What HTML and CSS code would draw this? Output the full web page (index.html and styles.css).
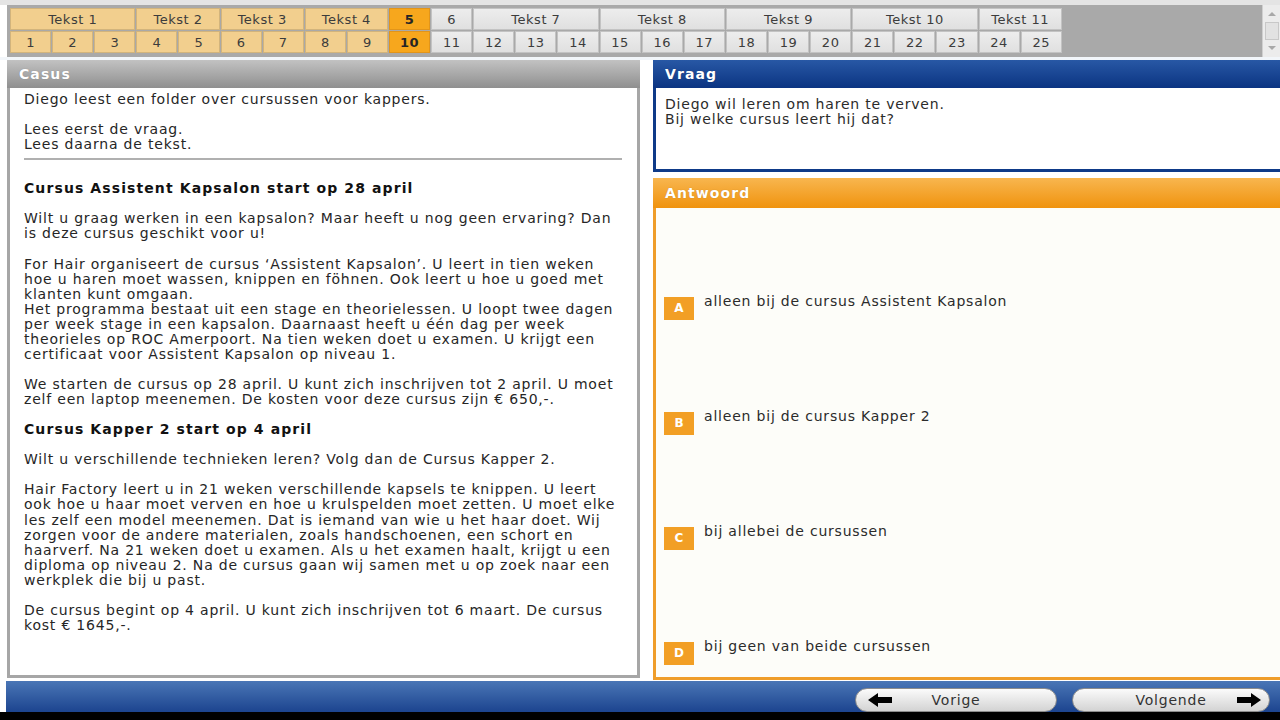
FILE: index.html
```html
<!DOCTYPE html>
<html lang="nl">
<head>
<meta charset="utf-8">
<title>Casus</title>
<link rel="stylesheet" href="styles.css">
</head>
<body>
<div class="topstrip"></div>
<div class="navwrap">
  <div class="nav">
    <div class="cell tan span3">Tekst 1</div>
    <div class="cell tan span2">Tekst 2</div>
    <div class="cell tan span2">Tekst 3</div>
    <div class="cell tan span2">Tekst 4</div>
    <div class="cell active">5</div>
    <div class="cell light">6</div>
    <div class="cell light span3">Tekst 7</div>
    <div class="cell light span3">Tekst 8</div>
    <div class="cell light span3">Tekst 9</div>
    <div class="cell light span3">Tekst 10</div>
    <div class="cell light span2">Tekst 11</div>
    <div class="cell tan">1</div>
    <div class="cell tan">2</div>
    <div class="cell tan">3</div>
    <div class="cell tan">4</div>
    <div class="cell tan">5</div>
    <div class="cell tan">6</div>
    <div class="cell tan">7</div>
    <div class="cell tan">8</div>
    <div class="cell tan">9</div>
    <div class="cell active">10</div>
    <div class="cell light">11</div>
    <div class="cell light">12</div>
    <div class="cell light">13</div>
    <div class="cell light">14</div>
    <div class="cell light">15</div>
    <div class="cell light">16</div>
    <div class="cell light">17</div>
    <div class="cell light">18</div>
    <div class="cell light">19</div>
    <div class="cell light">20</div>
    <div class="cell light">21</div>
    <div class="cell light">22</div>
    <div class="cell light">23</div>
    <div class="cell light">24</div>
    <div class="cell light">25</div>
  </div>
  <div class="scrollbar">
    <span class="sb-up"></span>
    <span class="sb-thumb"></span>
    <span class="sb-down"></span>
  </div>
</div>
<div class="sep"></div>
<main class="panels">
  <section class="casus">
    <div class="phead casus-head">Casus</div>
    <div class="casus-body">
      <p>Diego leest een folder over cursussen voor kappers.</p>
      <p class="before-rule">Lees eerst de vraag.<br>Lees daarna de tekst.</p>
      <hr class="rule">
      <p class="h">Cursus Assistent Kapsalon start op 28 april</p>
      <p>Wilt u graag werken in een kapsalon? Maar heeft u nog geen ervaring? Dan<br>is deze cursus geschikt voor u!</p>
      <p>For Hair organiseert de cursus ‘Assistent Kapsalon’. U leert in tien weken<br>hoe u haren moet wassen, knippen en föhnen. Ook leert u hoe u goed met<br>klanten kunt omgaan.<br>Het programma bestaat uit een stage en theorielessen. U loopt twee dagen<br>per week stage in een kapsalon. Daarnaast heeft u één dag per week<br>theorieles op ROC Amerpoort. Na tien weken doet u examen. U krijgt een<br>certificaat voor Assistent Kapsalon op niveau 1.</p>
      <p>We starten de cursus op 28 april. U kunt zich inschrijven tot 2 april. U moet<br>zelf een laptop meenemen. De kosten voor deze cursus zijn € 650,-.</p>
      <p class="h">Cursus Kapper 2 start op 4 april</p>
      <p>Wilt u verschillende technieken leren? Volg dan de Cursus Kapper 2.</p>
      <p>Hair Factory leert u in 21 weken verschillende kapsels te knippen. U leert<br>ook hoe u haar moet verven en hoe u krulspelden moet zetten. U moet elke<br>les zelf een model meenemen. Dat is iemand van wie u het haar doet. Wij<br>zorgen voor de andere materialen, zoals handschoenen, een schort en<br>haarverf. Na 21 weken doet u examen. Als u het examen haalt, krijgt u een<br>diploma op niveau 2. Na de cursus gaan wij samen met u op zoek naar een<br>werkplek die bij u past.</p>
      <p>De cursus begint op 4 april. U kunt zich inschrijven tot 6 maart. De cursus<br>kost € 1645,-.</p>
    </div>
  </section>
  <section class="right">
    <div class="vraag">
      <div class="phead vraag-head">Vraag</div>
      <div class="vraag-body">Diego wil leren om haren te verven.<br>Bij welke cursus leert hij dat?</div>
    </div>
    <div class="antwoord">
      <div class="phead antwoord-head">Antwoord</div>
      <div class="antwoord-body">
        <div class="option"><span class="letter">A</span><span class="otext">alleen bij de cursus Assistent Kapsalon</span></div>
        <div class="option"><span class="letter">B</span><span class="otext">alleen bij de cursus Kapper 2</span></div>
        <div class="option"><span class="letter">C</span><span class="otext">bij allebei de cursussen</span></div>
        <div class="option last"><span class="letter">D</span><span class="otext">bij geen van beide cursussen</span></div>
      </div>
    </div>
  </section>
</main>
<footer class="bottombar">
  <button class="btn prev">
    <svg class="arrow" viewBox="0 0 24 14" width="24" height="14"><polygon points="0,7 10,0 10,4 24,4 24,10 10,10 10,14" fill="#000"/></svg>
    <span class="btext">Vorige</span>
    <span class="spacer"></span>
  </button>
  <button class="btn next">
    <span class="spacer"></span>
    <span class="btext">Volgende</span>
    <svg class="arrow" viewBox="0 0 24 14" width="24" height="14"><polygon points="24,7 14,0 14,4 0,4 0,10 14,10 14,14" fill="#000"/></svg>
  </button>
</footer>
<div class="blackstrip"></div>
</body>
</html>
```

FILE: styles.css
```css
* { box-sizing: border-box; }
html, body {
  margin: 0;
  padding: 0;
  width: 1280px;
  height: 720px;
  overflow: hidden;
  background: #ffffff;
  font-family: "DejaVu Sans", Verdana, sans-serif;
  font-size: 14px;
  letter-spacing: 0.8px;
  color: #2b2b2b;
}

.topstrip {
  height: 5px;
  background: #e4e4e4;
}

.navwrap {
  display: flex;
  height: 52px;
  margin-left: 7px;
}
.nav {
  flex: 1;
  background: #a9a9a9;
  padding: 3px;
  display: grid;
  grid-template-columns: repeat(25, 41.12px);
  grid-template-rows: 22px 22px;
  column-gap: 1px;
  row-gap: 1px;
  align-content: start;
}
.cell {
  display: flex;
  align-items: center;
  justify-content: center;
  font-size: 13px;
  letter-spacing: 0.5px;
  color: #3c3c3c;
  border: 1px solid #c9b183;
}
.span2 { grid-column: span 2; }
.span3 { grid-column: span 3; }
.tan {
  background: #f2cf8e;
  border-color: #d2b47c;
}
.active {
  background: #f7a71d;
  border-color: #e2951a;
  font-weight: bold;
  color: #252525;
}
.light {
  background: linear-gradient(#ededed, #e0e0e0);
  border-color: #c3c3c3;
}

.scrollbar {
  width: 18px;
  flex-shrink: 0;
  background: #ececec;
  border-left: 1px solid #cfcfcf;
  display: flex;
  flex-direction: column;
  align-items: center;
  padding-top: 7px;
}
.sb-up {
  width: 0;
  height: 0;
  border-left: 4px solid transparent;
  border-right: 4px solid transparent;
  border-bottom: 4px solid #a8a8a8;
}
.sb-thumb {
  width: 14px;
  height: 18px;
  margin-top: 6px;
  background: #e2e2e2;
  border: 1px solid #c8c8c8;
}
.sb-down {
  width: 0;
  height: 0;
  margin-top: 6px;
  border-left: 4px solid transparent;
  border-right: 4px solid transparent;
  border-top: 4px solid #a8a8a8;
}

.sep {
  height: 3px;
  background: #f2f6fa;
}

.panels {
  display: flex;
  gap: 13px;
  margin-left: 7px;
  height: 620px;
}

.phead {
  color: #ffffff;
  font-weight: bold;
  font-size: 14px;
  letter-spacing: 1.1px;
  padding-left: 12px;
  display: flex;
  align-items: center;
  text-shadow: 0 0 1px rgba(0,0,0,0.25);
}

.casus {
  width: 633px;
  flex-shrink: 0;
  display: flex;
  flex-direction: column;
}
.casus-head {
  height: 28px;
  background: linear-gradient(#c2c2c2, #8f8f8f);
}
.casus-body {
  height: 590px;
  background: #ffffff;
  border: 3px solid #a6a6a6;
  border-top: none;
  padding: 4px 14px 0 14px;
  line-height: 15.06px;
  white-space: nowrap;
  color: #262626;
}
.casus-body p {
  margin: 0 0 15.06px 0;
}
.casus-body p.before-rule {
  margin-bottom: 0;
}
.casus-body .h {
  font-weight: bold;
  letter-spacing: 1.1px;
  color: #111;
}
.rule {
  border: none;
  border-top: 2px solid #b0b0b0;
  margin: 6px 1px 21px 0;
}

.right {
  width: 633px;
  flex-shrink: 0;
  display: flex;
  flex-direction: column;
  gap: 6px;
}
.vraag-head {
  height: 28px;
  background: linear-gradient(#2858a5, #0b3482);
}
.vraag-body {
  height: 84px;
  background: #ffffff;
  border: 3px solid #0e3a88;
  border-top: none;
  padding: 9px 9px;
  line-height: 15px;
  color: #2b2b2b;
}
.antwoord-head {
  height: 30px;
  background: linear-gradient(#f8b64f, #f0930e);
}
.antwoord-body {
  height: 472px;
  background: #fdfdf9;
  border: 3px solid #ef9d2a;
  border-top: none;
  padding: 85px 8px 0 8px;
  display: flex;
  flex-direction: column;
}
.option {
  display: flex;
  align-items: flex-start;
  gap: 10px;
  height: 115px;
  line-height: 15px;
}
.option.last { height: auto; }
.letter {
  width: 30px;
  height: 23px;
  margin-top: 4px;
  background: #f29f25;
  color: #ffffff;
  font-weight: bold;
  font-size: 12px;
  letter-spacing: 0;
  display: flex;
  align-items: center;
  justify-content: center;
}
.otext {
  padding-top: 1px;
  color: #2b2b2b;
}

.bottombar {
  margin-top: 1px;
  margin-left: 6px;
  height: 31px;
  background: linear-gradient(#4a76b6, #1c448f);
  display: flex;
  justify-content: flex-end;
  align-items: flex-start;
  gap: 15px;
  padding: 7px 10px 0 0;
}
.btn {
  height: 24px;
  border: 1px solid #8c8c8c;
  border-radius: 12px;
  background: linear-gradient(#fbfbfb, #d3d3d3);
  display: flex;
  align-items: center;
  padding: 0;
  font-family: "DejaVu Sans", Verdana, sans-serif;
  font-size: 14px;
  letter-spacing: 0.8px;
  color: #333;
}
.btn.prev { width: 202px; padding-left: 12px; padding-right: 12px; }
.btn.next { width: 198px; padding-left: 8px; padding-right: 8px; }
.btext {
  flex: 1;
  text-align: center;
}
.spacer {
  width: 24px;
}
.arrow { display: block; }

.blackstrip {
  height: 8px;
  background: #000000;
}
```
